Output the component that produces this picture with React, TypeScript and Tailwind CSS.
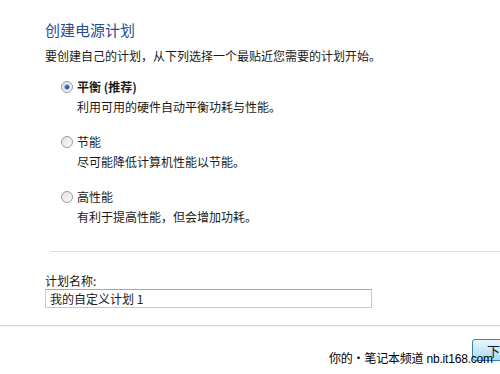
const options = [
  { label: "平衡 (推荐)", desc: "利用可用的硬件自动平衡功耗与性能。", checked: true },
  { label: "节能", desc: "尽可能降低计算机性能以节能。", checked: false },
  { label: "高性能", desc: "有利于提高性能，但会增加功耗。", checked: false },
]

function Radio({ checked }: { checked: boolean }) {
  return (
    <span className="mt-[4px] flex size-[12px] shrink-0 items-center justify-center rounded-full border border-[#9a9a9a] bg-gradient-to-br from-[#e2e2e2] to-[#fbfbfb]">
      {checked && (
        <span className="size-[6px] rounded-full border border-[#7fb0e0] bg-gradient-to-br from-[#4a7fc4] to-[#12407e]" />
      )}
    </span>
  )
}

export default function App() {
  return (
    <div
      className="relative h-[374px] w-[500px] overflow-hidden bg-white text-[12px] text-[#1a1a1a]"
      style={{ fontFamily: '"Noto Sans CJK SC", "Noto Sans", sans-serif' }}
    >
      <div className="pl-[45px] pt-[20px]">
        <h1 className="text-[15px] leading-[20px] text-[#2a4d92]">创建电源计划</h1>
        <p className="mt-[6px] leading-[20px]">要创建自己的计划，从下列选择一个最贴近您需要的计划开始。</p>

        <div className="mt-[11px] flex flex-col gap-[15px] pl-[16px]">
          {options.map((o) => (
            <div key={o.label} className="flex gap-[4px]">
              <Radio checked={o.checked} />
              <div className="leading-[20px]">
                <div className={o.checked ? "font-bold" : ""}>{o.label}</div>
                <div>{o.desc}</div>
              </div>
            </div>
          ))}
        </div>
      </div>

      <div className="ml-[50px] mt-[24px] h-px bg-[#dcdcdc]" />

      <div className="pl-[45px] pt-[21px]">
        <div className="leading-[16px]">计划名称:</div>
        <div className="flex h-[19px] w-[327px] items-center border border-[#c9c9c9] border-t-[#a8a8a8] px-[4px] leading-none">
          我的自定义计划 1
        </div>
      </div>

      <div className="mt-[17px] h-[2px] border-t border-[#d6d6d6] bg-[#f4f4f4]" />

      <div className="mt-[12px] pl-[472px]">
        <button
          type="button"
          className="h-[22px] w-[75px] whitespace-nowrap rounded-[3px] border border-[#3c7fb1] bg-gradient-to-b from-[#eaf6fd] to-[#a7d9f5] pl-[14px] text-left text-[13px] leading-none"
        >
          下一步
        </button>
      </div>

      <div
        className="absolute left-[329px] top-[350px] whitespace-nowrap text-[12px] leading-[18px] tracking-[-0.2px] text-black"
        style={{ fontFamily: '"Liberation Sans", "Noto Sans CJK SC", sans-serif' }}
      >
        你的・笔记本频道 nb.it168.com
      </div>
    </div>
  )
}
